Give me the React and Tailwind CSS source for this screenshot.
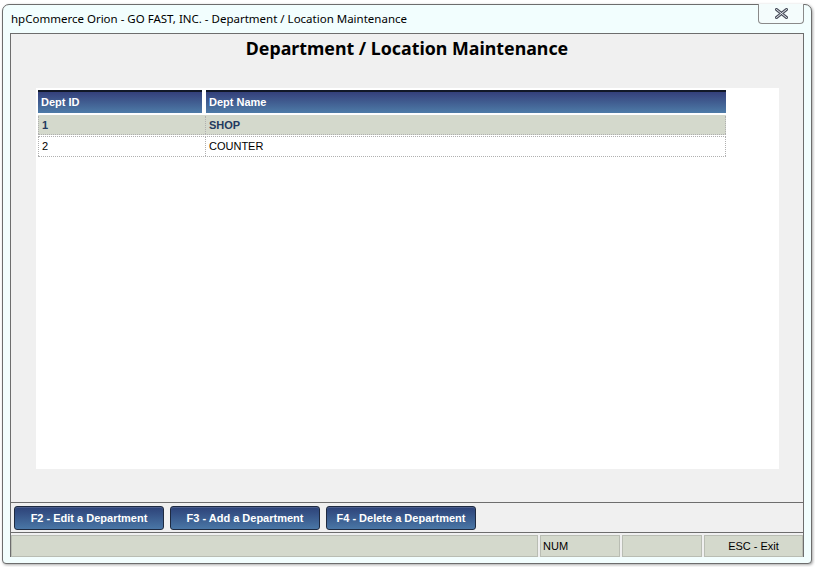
import React from "react";

const btn =
  "h-[24px] w-[150px] whitespace-nowrap rounded-[3px] border border-[#1e2a40] bg-gradient-to-b from-[#2d4278] to-[#4a77a6] text-white font-bold text-[11px] flex items-center justify-center shadow-[inset_0_1px_0_rgba(255,255,255,0.15)]";

export default function App() {
  return (
    <div
      className="w-[815px] h-[567px] bg-white pl-[2px] pt-[4px] pr-[3px] pb-[3px]"
      style={{ fontFamily: "Tahoma, 'Liberation Sans', Arial, sans-serif" }}
    >
      <div className="relative h-full w-full rounded-t-[7px] rounded-b-[4px] border border-[#6d6d6d] bg-[#f2fefe] shadow-[1px_1px_3px_rgba(0,0,0,0.35)] flex flex-col px-[7px] pb-[6px]">
        {/* title bar */}
        <div className="h-[28px] flex items-center pl-[1px] pb-[1px]">
          <span
            className="text-[11.5px] text-black whitespace-nowrap"
            style={{ fontFamily: "'Noto Sans', 'Open Sans', sans-serif" }}
          >
            hpCommerce Orion - GO FAST, INC. - Department / Location Maintenance
          </span>
        </div>
        <div className="absolute right-[7px] top-[-1px] w-[46px] h-[20px] border border-[#8a8a8a] border-t-0 rounded-b-[4px] bg-[#f4fcfc] flex items-center justify-center">
          <svg width="13" height="11" viewBox="0 0 13 11">
            <path
              d="M1.5 1.5 L11.5 9.5 M11.5 1.5 L1.5 9.5"
              stroke="#4a4f5c"
              strokeWidth="3"
              strokeLinecap="round"
            />
            <path
              d="M1.5 1.5 L11.5 9.5 M11.5 1.5 L1.5 9.5"
              stroke="#e8ecf2"
              strokeWidth="1"
              strokeLinecap="round"
            />
          </svg>
        </div>

        {/* client */}
        <div className="flex-1 flex flex-col border border-[#6d6d6d] border-b-0 bg-[#f0f0f0]">
          <div className="flex-1 flex flex-col">
            <div className="h-[27px] flex items-center justify-center pt-[1px]">
              <h1
                className="text-[17.8px] font-bold text-black"
                style={{ fontFamily: "'Noto Sans', 'Open Sans', sans-serif" }}
              >
                Department / Location Maintenance
              </h1>
            </div>
            <div className="ml-[25px] mr-[24px] mt-[27px] h-[381px] bg-white pt-[2px] pl-[2px]">
              <div className="w-[688px] text-[11px]">
                <div className="flex gap-[4px] h-[23px]">
                  <div className="w-[164px] h-full border-t-[2px] border-[#111827] bg-gradient-to-b from-[#34407a] to-[#4e7ca8] text-white font-bold flex items-center pl-[3px]">
                    Dept ID
                  </div>
                  <div className="flex-1 h-full border-t-[2px] border-[#111827] bg-gradient-to-b from-[#34407a] to-[#4e7ca8] text-white font-bold flex items-center pl-[3px]">
                    Dept Name
                  </div>
                </div>
                <div className="mt-[2px] flex h-[20px] bg-[#d4d9cc] text-[#23395f] font-bold border-b border-dotted border-[#b0b0b0] pt-[1px]">
                  <div className="w-[168px] flex items-center pl-[3px] border-r border-dotted border-[#b0b0b0] border-l">
                    1
                  </div>
                  <div className="flex-1 flex items-center pl-[3px] border-r border-dotted border-[#b0b0b0]">
                    SHOP
                  </div>
                </div>
                <div className="mt-[1px] flex h-[21px] bg-white text-black border-y border-dotted border-[#b0b0b0]">
                  <div className="w-[168px] flex items-center pl-[3px] border-l border-r border-dotted border-[#b0b0b0]">
                    2
                  </div>
                  <div className="flex-1 flex items-center pl-[3px] border-r border-dotted border-[#b0b0b0]">
                    COUNTER
                  </div>
                </div>
              </div>
            </div>
            <div className="flex-1" />
          </div>

          {/* buttons bar */}
          <div className="h-[31px] border-y border-[#6d6d6d] bg-[#f0f0f0] flex items-center gap-[6px] pl-[3px] pt-[1px]">
            <button className={btn}>F2 - Edit a Department</button>
            <button className={btn}>F3 - Add a Department</button>
            <button className={btn}>F4 - Delete a Department</button>
          </div>

          {/* status bar */}
          <div className="h-[24px] flex gap-[2px] pt-[2px] bg-[#f0f0f0] text-[11px] text-black">
            <div className="w-[527px] bg-[#d4d9cc] border border-[#b9bdb3]" />
            <div className="w-[80px] bg-[#d4d9cc] border border-[#b9bdb3] flex items-center pl-[2px]">
              NUM
            </div>
            <div className="w-[80px] bg-[#d4d9cc] border border-[#b9bdb3]" />
            <div className="flex-1 bg-[#d4d9cc] border border-[#b9bdb3] flex items-center justify-center">
              ESC - Exit
            </div>
          </div>
        </div>
      </div>
    </div>
  );
}
